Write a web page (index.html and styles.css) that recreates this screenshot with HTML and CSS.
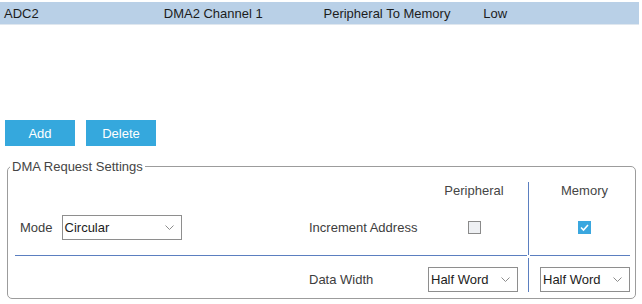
FILE: index.html
```html
<!DOCTYPE html>
<html lang="en">
<head>
    <meta charset="UTF-8" />
    <title>DMA Settings</title>
    <link rel="stylesheet" href="styles.css">
</head>
<body>
    <div class="request-list">
        <div class="request-row selected">
            <span class="cell">ADC2</span>
            <span class="cell">DMA2 Channel 1</span>
            <span class="cell">Peripheral To Memory</span>
            <span class="cell">Low</span>
        </div>
    </div>

    <div class="actions">
        <button class="btn">Add</button>
        <button class="btn">Delete</button>
    </div>

    <fieldset class="settings">
        <legend>DMA Request Settings</legend>

        <div class="grid upper">
            <div></div>
            <div></div>
            <div class="head">Peripheral</div>
            <div class="head mem">Memory</div>

            <div class="mode">
                <span>Mode</span>
                <div class="select mode-select">
                    <span>Circular</span>
                    <svg width="9" height="5" viewBox="0 0 9 5"><path d="M0.5 0.5 L4.5 4.5 L8.5 0.5" fill="none" stroke="#8c8c8c" stroke-width="1"/></svg>
                </div>
            </div>
            <div class="label">Increment Address</div>
            <div class="center"><span class="check"></span></div>
            <div class="center mem">
                <span class="check checked">
                    <svg width="11" height="11" viewBox="0 0 11 11"><path d="M2 5.5 L4.5 8 L9 3" fill="none" stroke="#fff" stroke-width="1.6"/></svg>
                </span>
            </div>
        </div>

        <div class="divider">
            <span class="line left"></span>
            <span class="line right"></span>
        </div>

        <div class="grid lower">
            <div></div>
            <div class="label">Data Width</div>
            <div class="cell-select">
                <div class="select width-select">
                    <span>Half Word</span>
                    <svg width="9" height="5" viewBox="0 0 9 5"><path d="M0.5 0.5 L4.5 4.5 L8.5 0.5" fill="none" stroke="#8c8c8c" stroke-width="1"/></svg>
                </div>
            </div>
            <div class="cell-select mem">
                <div class="select width-select">
                    <span>Half Word</span>
                    <svg width="9" height="5" viewBox="0 0 9 5"><path d="M0.5 0.5 L4.5 4.5 L8.5 0.5" fill="none" stroke="#8c8c8c" stroke-width="1"/></svg>
                </div>
            </div>
        </div>
    </fieldset>
</body>
</html>
```

FILE: styles.css
```css
* {
    box-sizing: border-box;
    margin: 0;
    padding: 0;
}

body {
    background: #ffffff;
    font-family: "Liberation Sans", Arial, sans-serif;
    font-size: 13px;
    color: #3d3d3d;
    width: 642px;
    height: 304px;
    overflow: hidden;
}

/* Lista zadan DMA */
.request-list {
    padding-top: 2px;
    height: 25px;
}

.request-row {
    display: flex;
    width: 639px;
    height: 22px;
    align-items: center;
}

.request-row.selected {
    background: #b9d0e7;
    border-bottom: 1px solid #dfe7ef;
    height: 23px;
}

.request-row .cell {
    width: 160px;
    padding-left: 4px;
    color: #1c1c1c;
}

.actions {
    display: flex;
    gap: 11px;
    margin: 95px 0 0 5px;
}

.btn {
    width: 70px;
    height: 26px;
    border: none;
    background: #35a8dd;
    color: #ffffff;
    font-family: "Liberation Sans", Arial, sans-serif;
    font-size: 13px;
    cursor: pointer;
}

/* Ramka ustawien */
.settings {
    margin: 13px 0 0 7px;
    width: 629px;
    border: 1px solid #9c9c9c;
    border-radius: 5px;
    padding: 0 5px 6px 7px;
    min-width: 0;
}

.settings legend {
    font-size: 13px;
    line-height: 15px;
    color: #454545;
    padding: 0 2px;
    margin-left: -5px;
}

.grid {
    display: grid;
    grid-template-columns: 294px 111px 108px 102px;
}

.upper {
    margin-top: 8px;
    grid-template-rows: 18px 55px;
}

.lower {
    margin-top: 2px;
    grid-template-rows: 34px;
}

.mem {
    border-left: 1px solid #5b7fc0;
    padding-left: 11px;
}

.head {
    text-align: center;
    line-height: 18px;
    color: #454545;
}

.head.mem {
    padding-left: 10px;
}

.mode {
    display: flex;
    align-items: center;
    gap: 9px;
    padding-left: 5px;
}

.label {
    display: flex;
    align-items: center;
}

.lower .label {
    padding-top: 9px;
}

.center {
    display: flex;
    align-items: center;
    justify-content: center;
}

.center.mem {
    padding-left: 10px;
}

.check {
    width: 13px;
    height: 13px;
    border: 1px solid #8a8a8a;
    background: #eef0f3;
    display: flex;
    align-items: center;
    justify-content: center;
}

.check.checked {
    border: none;
    background: #3aa7df;
}

.divider {
    display: flex;
    gap: 3px;
    height: 1px;
}

.divider .line {
    height: 1px;
    background: #5b7fc0;
}

.divider .left {
    width: 512px;
}

.divider .right {
    flex: 1;
}

.cell-select {
    padding-top: 9px;
    padding-left: 8px;
}

.cell-select.mem {
    padding-left: 11px;
}

.select {
    display: flex;
    align-items: center;
    justify-content: space-between;
    height: 25px;
    border: 1px solid #8e8e8e;
    background: #ffffff;
    padding: 0 7px 0 2px;
    color: #1c1c1c;
}

.mode-select {
    width: 120px;
}

.width-select {
    width: 90px;
}
```
